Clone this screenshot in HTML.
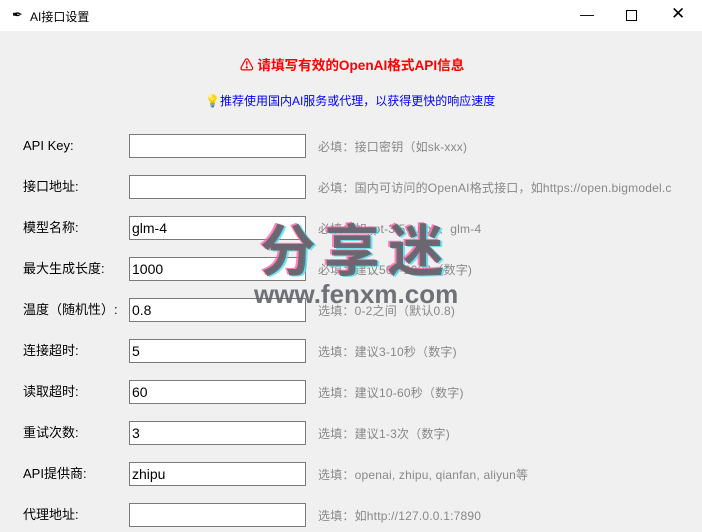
<!DOCTYPE html><html><head><meta charset="utf-8"><style>
body{margin:0;width:702px;height:532px;background:#f0f0f0;font-family:"Liberation Sans","Noto Sans CJK SC",sans-serif;position:relative;overflow:hidden}
.tb{position:absolute;left:0;top:0;width:702px;height:31px;background:#fff;}
.t{position:absolute;font-size:13px;white-space:nowrap}
.lab{position:absolute;left:23px;font-size:13px;color:#000;line-height:16px}
.in{position:absolute;left:129px;background:#fff;border:1px solid #7a7a7a;font-size:14px;line-height:22px;padding-left:2px;box-sizing:border-box;width:177px;height:24px}
.h{position:absolute;left:318px;font-size:12px;color:#888;white-space:nowrap;line-height:16px;letter-spacing:0.2px}
.wm{position:absolute;font-weight:bold;color:rgba(95,100,105,.9);white-space:nowrap;text-shadow:-2px -1px 0 rgba(255,100,170,.8),2px 1px 0 rgba(80,220,240,.8)}
</style></head><body>
<div class="tb"></div>
<div class="t" style="left:12px;top:7px;font-size:13px">&#x2712;</div>
<div class="t" style="left:30px;top:8px;font-size:12px">AI接口设置</div>
<div class="t" style="left:580px;top:6px;font-size:14px">&#x2014;</div>
<div style="position:absolute;left:626px;top:10px;width:9px;height:9px;border:1px solid #000"></div>
<div class="t" style="left:671px;top:4px;font-size:17px">&#x2715;</div>
<div class="t" style="left:240px;top:54px;color:#f00;font-weight:bold;font-size:13.6px">⚠ 请填写有效的OpenAI格式API信息</div>
<div class="t" style="left:205px;top:92px;color:#00f;font-size:12px">💡推荐使用国内AI服务或代理，以获得更快的响应速度</div>
<div class="lab" style="top:138px">API Key:</div><div class="in" style="top:134px"></div><div class="h" style="top:139px">必填：接口密钥（如sk-xxx)</div>
<div class="lab" style="top:179px">接口地址:</div><div class="in" style="top:175px"></div><div class="h" style="top:180px">必填：国内可访问的OpenAI格式接口，如https://open.bigmodel.c</div>
<div class="lab" style="top:220px">模型名称:</div><div class="in" style="top:216px">glm-4</div><div class="h" style="top:221px">必填：如gpt-3.5-turbo、glm-4</div>
<div class="lab" style="top:261px">最大生成长度:</div><div class="in" style="top:257px">1000</div><div class="h" style="top:262px">必填：建议500-2000（数字)</div>
<div class="lab" style="top:302px">温度（随机性）:</div><div class="in" style="top:298px">0.8</div><div class="h" style="top:303px">选填：0-2之间（默认0.8)</div>
<div class="lab" style="top:343px">连接超时:</div><div class="in" style="top:339px">5</div><div class="h" style="top:344px">选填：建议3-10秒（数字)</div>
<div class="lab" style="top:384px">读取超时:</div><div class="in" style="top:380px">60</div><div class="h" style="top:385px">选填：建议10-60秒（数字)</div>
<div class="lab" style="top:425px">重试次数:</div><div class="in" style="top:421px">3</div><div class="h" style="top:426px">选填：建议1-3次（数字)</div>
<div class="lab" style="top:466px">API提供商:</div><div class="in" style="top:462px">zhipu</div><div class="h" style="top:467px">选填：openai, zhipu, qianfan, aliyun等</div>
<div class="lab" style="top:507px">代理地址:</div><div class="in" style="top:503px"></div><div class="h" style="top:508px">选填：如http://127.0.0.1:7890</div>
<div class="wm" style="left:260px;top:222px;font-size:56px;letter-spacing:8px;line-height:60px">分享迷</div>
<div class="wm" style="left:254px;top:280px;font-size:26px;text-shadow:none;line-height:28px">www.fenxm.com</div>
</body></html>
